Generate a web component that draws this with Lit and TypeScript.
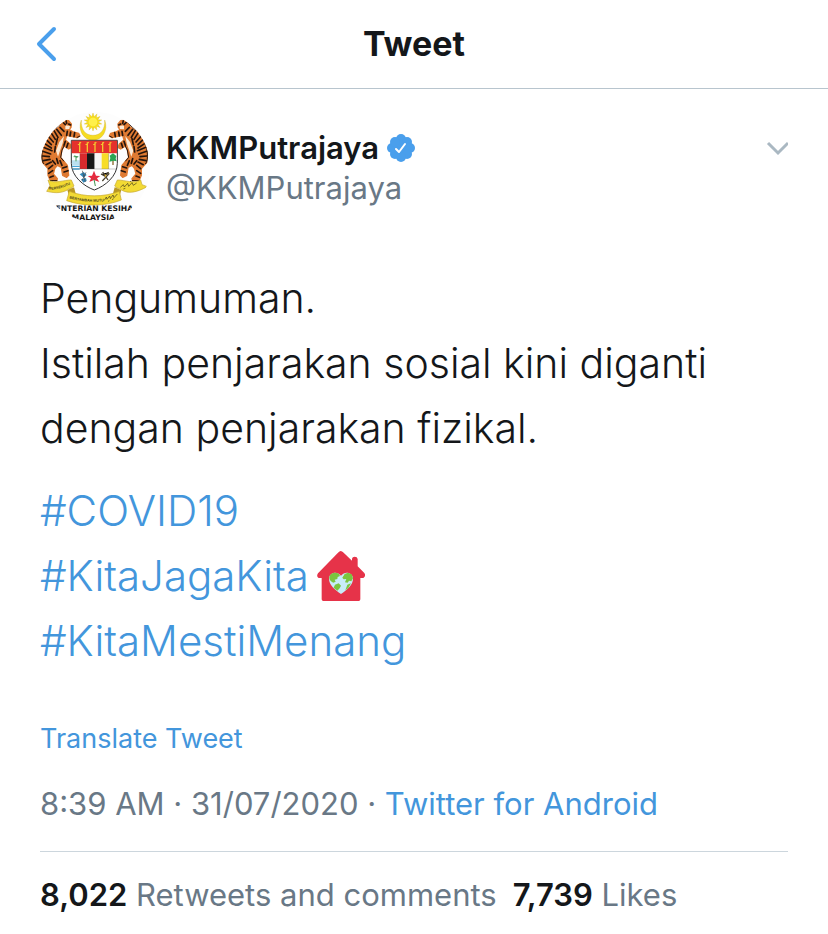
import { LitElement, html, css, svg } from "lit";
import { customElement } from "lit/decorators.js";

const tiger = svg`
  <path d="M98 66L106 61L118 62L126 72L125 82L120 89L132 96L148 100L152 108L144 113L126 109L112 106L108 120L122 132L126 142L118 147L104 138L98 150L94 172L104 184L114 196L118 226L112 232L100 226L96 202L84 196L76 206L72 222L84 236L82 242L62 240L56 226L56 206L40 188L38 166L40 140L48 116L62 98L80 88L90 80Z" fill="#df7a32" stroke="#df7a32" stroke-width="4" stroke-linejoin="round"/>
  <path d="M108 76L122 78L120 87L108 88Z M104 108L100 130L92 152L86 170L80 152L90 126Z" fill="#fbead6"/>
  <path d="M92 82L104 94M82 88L96 106M74 92L86 112M65 98L78 118M56 108L72 126M50 118L66 134M45 130L66 144M42 142L68 152M40 154L64 162M40 168L60 170M42 182L62 178M50 194L66 186M58 206L70 196M58 220L70 212M62 232L72 228M70 182L78 192M82 176L86 190M92 182L98 196M100 204L112 200M104 216L116 212M114 94L112 106M124 96L122 108M136 98L134 110M108 124L104 136M116 130L112 142M100 66L108 74M110 62L112 70M118 72L124 75M84 116L80 134M78 140L76 156" stroke="#24150e" stroke-width="5" stroke-linecap="round" fill="none"/>
  <path d="M98 66C80 90 50 96 42 136C36 160 36 184 44 192M104 138L98 150L94 172L104 184M62 242H84M142 113L152 108" stroke="#24150e" stroke-width="3" fill="none"/>`;

const rays = Array.from({ length: 14 }, (_, i) => {
  const at = (angle: number, r: number) =>
    `${(191 + Math.cos(angle) * r).toFixed(1)} ${(66 + Math.sin(angle) * r).toFixed(1)}`;
  const a = (i / 14) * Math.PI * 2 - Math.PI / 2;
  return `${at(a, 27)}L${at(a + Math.PI / 14, 16)}`;
}).join("L");

const crest = svg`
  <svg class="avatar" viewBox="32 36 330 330" role="img" aria-label="Kementerian Kesihatan Malaysia">
    <defs><clipPath id="round"><circle cx="197" cy="201" r="165"/></clipPath></defs>
    <g clip-path="url(#round)">
      <path d="M32 36h330v330H32z" fill="#fdfdfd"/>
      <path d="M156 60C144 92 164 121 191 121C218 121 238 92 226 60C228 88 214 106 191 106C168 106 154 88 156 60Z" fill="#f6dc22" stroke="#c9ab31" stroke-width="1"/>
      <path d=${`M${rays}Z`} fill="#f7df1c" stroke="#d7b21f" stroke-width="1"/>
      <circle cx="191" cy="66" r="13" fill="#fff04a"/>
      ${tiger}
      <g transform="translate(392 0) scale(-1 1)">${tiger}</g>
      <g transform="translate(4 0)">
        <path d="M122 121H260V190C260 228 224 258 191 270C158 258 122 228 122 190Z" fill="#fff" stroke="#333" stroke-width="3"/>
        <path d="M123 122H259V160H123Z" fill="#e5322c"/>
        <path d="M147 156V127M170 156V127M193 156V127M216 156V127M238 156V127M142 134L151 127M165 134L174 127M188 134L197 127M211 134L220 127M233 134L242 127" stroke="#f3c630" stroke-width="4"/>
        <path d="M148 160H169V207H148Z" fill="#d92a2d"/><path d="M169 160H192V207H169Z" fill="#171717"/>
        <path d="M192 160H213V207H192Z" fill="#f5f5f5"/><path d="M213 160H234V207H213Z" fill="#f7dd27"/>
        <path d="M124 199H147M126 207H147" stroke="#4aa7d8" stroke-width="4"/>
        <path d="M124 181H147V196H124Z" fill="#b9e0ef"/>
        <path d="M136 184V168M129 170L143 170M132 166L140 174" stroke="#459b55" stroke-width="3"/>
        <path d="M247 195V175" stroke="#896a2e" stroke-width="4"/>
        <path d="M236 185L239 174L237 167L247 160L257 168L255 176L258 184L249 182Z" fill="#29a653"/>
        <path d="M124 207H258M147 160V207M234 160V207" stroke="#555" stroke-width="1"/>
        <path d="M147 223L159 216L168 225L159 233Z M151 238L166 234L168 243L158 248Z" fill="#378abb"/>
        <path d="M155 212L164 246M166 217L154 242" stroke="#444" stroke-width="2"/>
        <path d="M190 240L176 246L181 235L171 228L184 227L190 212L196 227L209 228L199 235L206 246Z" fill="#e52b3f"/>
        <path d="M190 238L194 258" stroke="#3f944e" stroke-width="3"/>
        <path d="M211 222L222 228L234 217M215 243L236 220M216 216L232 240" stroke="#4b4432" stroke-width="4"/>
        <path d="M222 222L228 226L223 233Z" fill="#ddb12e"/>
      </g>
      <path d="M56 240C78 252 102 240 126 240L134 258C124 268 118 264 114 270C92 282 70 278 52 274L62 258Z M334 240C312 252 288 240 264 240L256 258C266 268 272 264 276 270C298 282 320 278 354 260L338 254Z" fill="#f2da34" stroke="#c6a72f" stroke-width="2"/>
      <path d="M114 270L134 262L140 284L120 290M276 270L256 262L250 284L270 290" fill="#b99722"/>
      <path d="M120 274C166 292 224 292 270 274L276 300C226 320 164 320 112 302Z" fill="#f2da34" stroke="#c6a72f" stroke-width="2"/>
      <path id="motto" d="M120 295Q170 311 240 302" fill="none"/>
      <path id="unity" d="M58 268Q86 272 134 248" fill="none"/>
      <text class="motto"><textPath href="#unity">BERSEKUTU</textPath></text>
      <text class="motto"><textPath href="#motto">BERTAMBAH MUTU</textPath></text>
      <path d="M225 301L231 291L233 298L241 288L243 296L251 285L254 293L264 282M236 304L240 302M248 299L253 296M273 262L282 254L285 261L295 250L298 259L308 248L312 256L322 249M282 267L288 265M302 245L306 243" stroke="#423b1d" stroke-width="2" fill="none"/>
      <text class="ministry" x="195" y="332">ENTERIAN KESIHA</text>
      <text class="ministry" x="192" y="359">MALAYSIA</text>
    </g>
  </svg>`;

@customElement("app-root")
export class AppRoot extends LitElement {
  static styles = css`
    :host { display: block; background: #fff; color: #14171a; font-family: Inter, "Liberation Sans", sans-serif; font-size: 31px; line-height: 40px; }
    * { box-sizing: border-box; }
    button { border: 0; padding: 0; background: none; color: inherit; font: inherit; cursor: pointer; }
    svg { display: block; }
    a { color: #4396dc; text-decoration: none; }
    .bar { display: grid; grid-template-columns: 1fr auto 1fr; align-items: center; height: 89px; padding: 0 32px; border-bottom: 1px solid #b8c5ce; }
    .back { justify-self: start; }
    h1 { margin: 0; font-size: 34px; font-weight: 750; }
    .tweet { padding: 23px 40px 0; }
    .author { display: flex; align-items: flex-start; gap: 16px; }
    .avatar { width: 110px; height: 110px; flex: none; }
    .motto { font: bold 11px "Liberation Sans", sans-serif; fill: #4a421b; }
    .ministry { font: bold 23px "DejaVu Sans", sans-serif; text-anchor: middle; fill: #151515; }
    .names { flex: 1; padding-top: 16px; }
    .name { display: flex; align-items: center; gap: 8px; font-weight: 600; }
    .muted { color: #697886; }
    .more { margin-top: 24px; }
    .body { margin-top: 44px; font-size: 41px; line-height: 65px; font-weight: 300; }
    .body p { margin: 0 0 17px; }
    .tag { display: flex; align-items: center; gap: 8px; width: fit-content; font-size: 42px; }
    .translate { display: block; width: fit-content; margin-top: 46px; font-size: 27px; }
    .meta { margin: 25px 0 0; padding-bottom: 27px; border-bottom: 1px solid #ccd6dd; }
    .stats { display: flex; gap: 16px; padding: 23px 0 16px; }
    .stats a { color: #697886; }
    strong { color: #14171a; font-weight: 600; }
  `;

  render() {
    return html`
      <header class="bar">
        <button class="back" aria-label="Back">
          <svg width="30" height="40" viewBox="0 0 30 40" fill="none" stroke="#4a9fec" stroke-width="4" stroke-linecap="round" stroke-linejoin="round"><path d="M22 5L7 20L22 35"/></svg>
        </button>
        <h1>Tweet</h1>
      </header>
      <article class="tweet">
        <div class="author">
          ${crest}
          <div class="names">
            <div class="name">KKMPutrajaya
              <svg width="28" height="28" viewBox="0 0 28 28" role="img" aria-label="Verified">
                <g fill="#4a9fec"><circle cx="14" cy="14" r="11"/><circle cx="14" cy="5" r="5"/><circle cx="20" cy="8" r="5"/><circle cx="23" cy="14" r="5"/><circle cx="20" cy="20" r="5"/><circle cx="14" cy="23" r="5"/><circle cx="8" cy="20" r="5"/><circle cx="5" cy="14" r="5"/><circle cx="8" cy="8" r="5"/></g>
                <path d="M9 15L12 18L18 10" fill="none" stroke="#fff" stroke-width="2" stroke-linecap="round" stroke-linejoin="round"/>
              </svg>
            </div>
            <div class="muted">@KKMPutrajaya</div>
          </div>
          <button class="more" aria-label="More options">
            <svg width="22" height="24" viewBox="0 0 22 24" fill="none" stroke="#aab8c2" stroke-width="3"><path d="M2 7L12 17L22 7"/></svg>
          </button>
        </div>
        <div class="body">
          <p>Pengumuman.<br />Istilah penjarakan sosial kini diganti<br />dengan penjarakan fizikal.</p>
          <a class="tag" href="#covid19">#COVID19</a>
          <a class="tag" href="#kitajagakita">#KitaJagaKita
            <svg width="48" height="50" viewBox="0 0 144 150" aria-hidden="true">
              <path d="M71 0Q75 0 80 5L105 29V23Q106 17 113 17Q121 17 122 24V46L142 66Q148 75 139 81H130V145Q130 150 125 150H19Q14 150 14 145V81H5Q-3 76 3 67L63 5Q68 0 71 0Z" fill="#e63349"/>
              <path d="M72 129C54 116 36 102 36 83C36 66 59 57 72 74C85 57 108 66 108 83C108 102 90 116 72 129Z" fill="#c8ecf8"/>
              <path d="M37 78C40 66 56 62 66 69L69 75L62 78L61 84L53 86L56 92L49 95C42 91 36 87 37 78Z M54 101L65 97L72 104L68 112L61 119L50 110Z M76 80L83 69L93 65L104 70L108 82L103 91L96 89L92 95L84 94L88 84L80 85Z M91 101L102 97L94 111L85 118Z" fill="#7bc53f"/>
            </svg>
          </a>
          <a class="tag" href="#kitamestimenang">#KitaMestiMenang</a>
        </div>
        <a class="translate" href="#translate">Translate Tweet</a>
        <p class="meta muted">8:39 AM · 31/07/2020 · <a href="#source">Twitter for Android</a></p>
        <div class="stats">
          <a href="#retweets"><strong>8,022</strong> Retweets and comments</a>
          <a href="#likes"><strong>7,739</strong> Likes</a>
        </div>
      </article>`;
  }
}
